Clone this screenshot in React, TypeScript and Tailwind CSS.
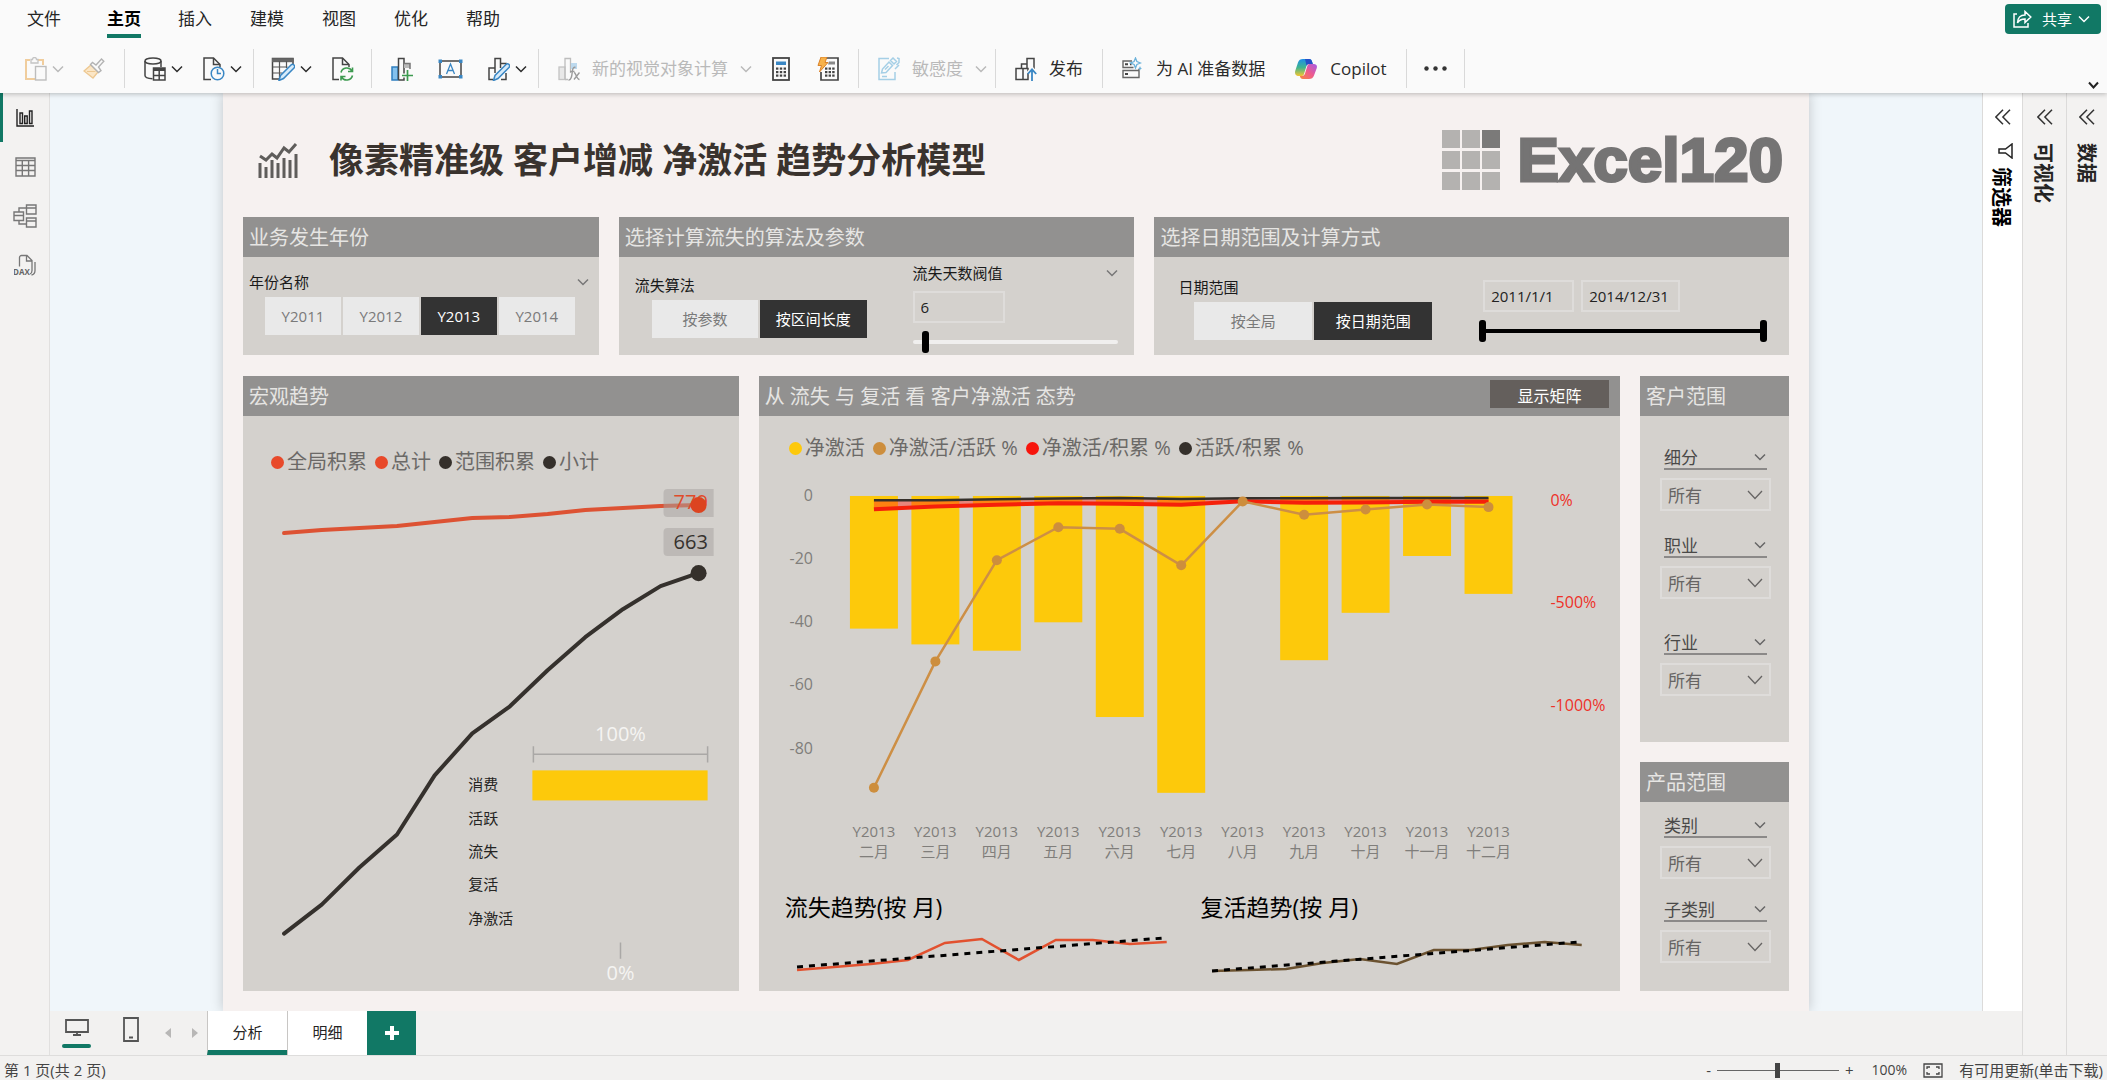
import React, { useState } from "react";

type IconProps = { className?: string };

/* ---------- small shared icons ---------- */

function Chevron({ className = "" }: IconProps) {
  return (
    <svg className={className} viewBox="0 0 12 8" fill="none" stroke="currentColor" aria-hidden="true">
      <path d="M1 1.5 6 6.5 11 1.5" strokeWidth="1.5" />
    </svg>
  );
}

function DoubleLeft() {
  return (
    <svg className="h-4 w-4" viewBox="0 0 16 16" fill="none" stroke="#333" strokeWidth="1.5" aria-hidden="true">
      <path d="M8 .8.9 8 8 15.2M15 .8 7.9 8 15 15.2" />
    </svg>
  );
}

/* ---------- ribbon icons ---------- */

function PasteIcon() {
  return (
    <svg className="h-6 w-[22px]" viewBox="0 0 22 24" fill="none" aria-hidden="true">
      <path d="M10 22H1V3h4M13 3h5v5" stroke="#f0cd9d" strokeWidth="2" />
      <path d="M6 5V2.500h1.500a2 2 0 0 1 4 0H13V6H6z" stroke="#c4c4c4" strokeWidth="1.300" />
      <rect x="10.500" y="9.500" width="10.500" height="13.500" fill="#fafafa" stroke="#bdbdbd" strokeWidth="1.400" />
    </svg>
  );
}

function BrushIcon() {
  return (
    <svg className="h-6 w-[22px]" viewBox="0 0 22 24" fill="none" aria-hidden="true">
      <path d="M1 14 8 8l7 7-5 6z" fill="#fbe6c6" stroke="#edc892" strokeWidth="1.300" />
      <path d="M4 14.500h8.500" stroke="#edc892" />
      <path d="m7.500 7.500 2-2 3.500 2.500 5.500-6 2.300 2.300L15.500 10l2.500 3.500-2.500 2z" fill="#fafafa" stroke="#b3b3b3" strokeWidth="1.400" />
    </svg>
  );
}

function DatabaseIcon() {
  return (
    <svg className="h-6 w-[22px]" viewBox="0 0 22 24" fill="none" stroke="#444" strokeWidth="1.500" aria-hidden="true">
      <ellipse cx="9" cy="4" rx="8" ry="3" />
      <path d="M1 4v14.500c0 1.700 3 3 7.500 3.200M17 4v6" />
      <rect x="9.500" y="11" width="11.500" height="12" fill="#fafafa" />
      <path d="M9.500 12.500h11.500" strokeWidth="3" />
      <path d="M9.500 18.500h11.500M15.200 14v9" />
    </svg>
  );
}

function FileClockIcon() {
  return (
    <svg className="h-6 w-[22px]" viewBox="0 0 22 24" fill="none" aria-hidden="true">
      <path d="M8 22.500H1V1h9.500L17 7.500V10" stroke="#444" strokeWidth="1.500" />
      <path d="M10.500 1v6.500H17" stroke="#444" strokeWidth="1.500" />
      <circle cx="14.500" cy="16.500" r="6.300" stroke="#3a87c4" strokeWidth="1.500" />
      <path d="M14.500 12v4.500h3.500" stroke="#3a87c4" strokeWidth="1.500" />
    </svg>
  );
}

function TableEditIcon() {
  return (
    <svg className="h-6 w-6" viewBox="0 0 24 24" fill="none" aria-hidden="true">
      <path d="M8 22H1.500V1.500H22V8" stroke="#444" strokeWidth="1.500" />
      <path d="M1 3.200h21.500" stroke="#666" strokeWidth="4" />
      <path d="M1.500 10h15M1.500 16h10M8.500 4v17M15.500 4v7" stroke="#555" strokeWidth="1.200" />
      <path d="m8 23.500 1.500-5L20 8a2 2 0 0 1 3 3L12.500 21.500z" fill="#d6ebfa" stroke="#3a87c4" strokeWidth="1.500" />
    </svg>
  );
}

function FileRefreshIcon() {
  return (
    <svg className="h-6 w-[22px]" viewBox="0 0 22 24" fill="none" aria-hidden="true">
      <path d="M7 22.500H1V1h9.500L17 7.500V10" stroke="#444" strokeWidth="1.500" />
      <path d="M10.500 1v6.500H17" stroke="#444" strokeWidth="1.500" />
      <path d="M9 15.500a6 6 0 0 1 11-1.500M20.500 18.500a6 6 0 0 1-11 1.500M20.500 10.500v4h-4.500M9 23.500v-4h4.500" stroke="#3d9a50" strokeWidth="1.600" />
    </svg>
  );
}

function ChartPlusIcon() {
  return (
    <svg className="h-6 w-[22px]" viewBox="0 0 22 24" fill="none" aria-hidden="true">
      <rect x="1" y="10" width="6" height="13" fill="#83c1ee" stroke="#2f7fc0" strokeWidth="1.500" />
      <path d="M7.500 23V1.500H13V23H7.500" fill="#fafafa" stroke="#444" strokeWidth="1.500" />
      <path d="M13 7h6v4h-6z" fill="#bbb" />
      <path d="M13 6.500h6V12" stroke="#777" strokeWidth="1.500" />
      <path d="M16.500 12v12M10.500 18.500h11.500" stroke="#fafafa" strokeWidth="4" />
      <path d="M16.500 13v11M11 18.500h11" stroke="#3d9a50" strokeWidth="1.700" />
    </svg>
  );
}

function TextBoxIcon() {
  return (
    <svg className="h-6 w-[25px]" viewBox="0 0 25 24" fill="none" aria-hidden="true">
      <rect x="2" y="4" width="21" height="16" stroke="#444" strokeWidth="1.500" />
      <path d="M8.500 17 12.500 7l4 10M9.800 13.500h5.400" stroke="#3a87c4" strokeWidth="1.300" />
      <path d="M.5 2.500h3.500v3.500H.5zM21 2.500h3.500v3.500H21zM.5 18h3.500v3.500H.5zM21 18h3.500v3.500H21z" fill="#3a87c4" />
    </svg>
  );
}

function ChartEditIcon() {
  return (
    <svg className="h-6 w-[22px]" viewBox="0 0 22 24" fill="none" aria-hidden="true">
      <path d="M5 22.500H1V11h6M7 16V1.500h5.500V11M12.500 6.500H18v2M18 16v6.500h-5" stroke="#444" strokeWidth="1.500" />
      <path d="m5.500 23.500 1.500-5L18 7.500a2 2 0 0 1 3 3L10 21.500z" fill="#d6ebfa" stroke="#3a87c4" strokeWidth="1.500" />
    </svg>
  );
}

function ChartFxIcon() {
  return (
    <svg className="h-6 w-[22px]" viewBox="0 0 22 24" fill="none" aria-hidden="true">
      <rect x="1" y="10" width="6" height="12.500" fill="#e8e8e8" stroke="#c4c4c4" strokeWidth="1.300" />
      <path d="M7 22.500V1.500h5.500V16M7 22.500h3" stroke="#bdbdbd" strokeWidth="1.300" />
      <path d="M13 6h6v6h-6z" fill="#bcd9ee" />
      <path d="M17.500 10.500c-2.500-1-3 2-3.300 5s-1 8-3.700 7.500M12 14.500h4.500M16 15.500c2 0 2.500 7 5.500 7M21.500 15.500l-5.500 7" stroke="#9b9b9b" strokeWidth="1.400" />
    </svg>
  );
}

function CalculatorIcon() {
  return (
    <svg className="h-6 w-[18px]" viewBox="0 0 18 24" fill="none" aria-hidden="true">
      <rect x="1" y="1" width="16" height="22" stroke="#444" strokeWidth="1.800" />
      <rect x="4" y="4.500" width="10" height="3.500" fill="#3a87c4" />
      <g fill="#444">
        {[10.5, 14, 17.5].map((y) => [4, 7.8, 11.6].map((x) => <rect key={x + "-" + y} x={x} y={y} width="2.400" height="2.200" />))}
      </g>
    </svg>
  );
}

function QuickCalcIcon() {
  return (
    <svg className="h-6 w-[22px]" viewBox="0 0 22 24" fill="none" aria-hidden="true">
      <path d="M9 1h12v22H4v-8" stroke="#444" strokeWidth="1.700" />
      <path d="M12 4.500h6v3h-7z" fill="#888" />
      <g fill="#444">
        {[10.5, 14, 17.5].map((y) => [8, 11.6, 15.2].map((x) => <rect key={x + "-" + y} x={x} y={y} width="2.400" height="2.200" />))}
      </g>
      <path d="M4 0h6L8 5.500h3L2.500 15l2-6.500H1z" fill="#f7b24a" stroke="#d9822b" />
    </svg>
  );
}

function SensitivityIcon() {
  return (
    <svg className="h-6 w-[22px]" viewBox="0 0 22 24" fill="none" stroke="#a5cfe6" strokeWidth="1.500" aria-hidden="true">
      <path d="M11 1.500H1v21h16V15" />
      <path d="m3.500 16 1-4 6.500-7 3.500 3.500L8 15.500zM12.500 3.500 15 1l3.500 3.500L16 7zM18.500 8l2.500-2.500V1.500L19 1M17 12l4-4" />
      <path d="m7 12.500 3.500-3.500M4 19.500h5" />
    </svg>
  );
}

function PublishIcon() {
  return (
    <svg className="h-6 w-[22px]" viewBox="0 0 22 24" fill="none" aria-hidden="true">
      <path d="M6.500 11.500V7H12M12 11V1.500h7V12M1 11.500h7v11H1zM8 11.500h5v11H1" stroke="#444" strokeWidth="1.500" />
      <path d="M17 24V12.500M13 16.500l4-4.500 4 4.500" stroke="#fafafa" strokeWidth="4" />
      <path d="M17 24V12.500M12.800 17l4.200-4.700 4.200 4.700" stroke="#3a87c4" strokeWidth="1.800" />
    </svg>
  );
}

function AiDataIcon() {
  return (
    <svg className="h-6 w-5" viewBox="0 0 20 24" fill="none" aria-hidden="true">
      <path d="M10 4H1v6.500h10.500M1 13.500h16v7H1zM17 12v1.500" stroke="#666" strokeWidth="1.400" />
      <path d="M3 7.200h3M3 17h3M8 7.200h1.500" stroke="#444" strokeWidth="2" />
      <path d="m13.500 1 1.400 3.600L18.500 6l-3.600 1.400-1.400 3.600-1.400-3.600L8.500 6l3.600-1.400z" fill="#fafafa" stroke="#6cb2da" strokeWidth="1.300" />
      <path d="m18 9 .7 1.800 1.300.5-1.300.6-.7 1.600-.7-1.600-1.300-.6 1.300-.5z" fill="#6cb2da" />
    </svg>
  );
}

function CopilotIcon() {
  return (
    <svg className="h-6 w-6" viewBox="0 0 24 24" aria-hidden="true">
      <defs>
        <linearGradient id="cp-a" x1="0" y1="0" x2="0" y2="1">
          <stop offset="0" stopColor="#1c8fe8" />
          <stop offset=".5" stopColor="#3fb58f" />
          <stop offset="1" stopColor="#f5c531" />
        </linearGradient>
        <linearGradient id="cp-b" x1="1" y1="0" x2="0" y2="1">
          <stop offset="0" stopColor="#a35be8" />
          <stop offset=".5" stopColor="#ee5a8f" />
          <stop offset="1" stopColor="#f7893c" />
        </linearGradient>
      </defs>
      <path d="M9 2h6c2 0 2.600 1 3.200 3l.6 2H15c-1.500 0-2.300 1-2.700 2.400L10 17c-.5 1.500-1.300 2-2.800 2H5c-3 0-4.500-2-3.800-5L4 5.500C4.800 3 6.500 2 9 2z" fill="url(#cp-a)" />
      <path d="M11 2h4c2 0 2.600 1 3.200 3l.6 2H15c-1.300 0-2 .6-2.500 1.700z" fill="#2550c8" />
      <path d="M15 22H9c-2 0-2.600-1-3.200-3H8c1.500 0 2.600-.8 3-2.400L13.500 8.500C14 7 14.800 7 16 7h3c3 0 4.500 1 3.800 4L20 18.500C19.200 21 17.500 22 15 22z" fill="url(#cp-b)" />
    </svg>
  );
}

function ShareIcon() {
  return (
    <svg className="h-[18px] w-[19px]" viewBox="0 0 19 18" fill="none" stroke="#fff" strokeWidth="1.500" aria-hidden="true">
      <path d="M4 4H1v13h14v-4" />
      <path d="M4.500 13c0-5 3-8 7.500-8V1.500L17.800 7 12 12.500V9C8.500 9 6 10 4.500 13z" />
    </svg>
  );
}

/* ---------- ribbon ---------- */

function ToolButton({
  icon,
  label,
  menu,
  muted,
  name,
  gap = "gap-3",
}: {
  icon: React.ReactNode;
  label?: string;
  menu?: boolean;
  muted?: boolean;
  name: string;
  gap?: string;
}) {
  return (
    <button type="button" aria-label={name} className={`flex items-center whitespace-nowrap text-[17px] ${label ? gap : "gap-[5px]"} ${muted ? "text-[#b9b9b9]" : "text-[#2b2b2b]"}`}>
      {icon}
      {label && <span>{label}</span>}
      {menu && <Chevron className="h-2 w-3" />}
    </button>
  );
}

function Group({ children, className }: { children: React.ReactNode; className: string }) {
  return <div className={`flex h-[39px] shrink-0 items-center border-r border-[#d9d9d9] ${className}`}>{children}</div>;
}

function Ribbon() {
  const menus = ["插入", "建模", "视图", "优化", "帮助"];
  return (
    <header className="relative z-10 bg-[#fafafa] shadow-[0_1px_5px_rgba(0,0,0,0.25)]">
      <div className="flex h-[49px] items-start justify-between pr-1.5">
        <nav className="flex pl-[27px] text-[17px] leading-[38px] text-[#252525]">
          <button type="button" className="mr-[46px]">文件</button>
          <button type="button" className="mr-[37px] border-b-4 border-[#117865] pt-1 font-bold leading-[30px] text-black">
            主页
          </button>
          <div className="flex gap-[38px]">
            {menus.map((m) => (
              <button type="button" key={m}>{m}</button>
            ))}
          </div>
        </nav>
        <button type="button" className="mt-1 flex h-[30px] w-24 items-center rounded-[4px] bg-[#117865] pl-2 text-[15px] text-white">
          <ShareIcon />
          <span className="ml-2.5">共享</span>
          <Chevron className="ml-1.5 h-2 w-3" />
        </button>
      </div>
      <div className="flex items-start justify-between">
        <div className="flex h-11">
          <Group className="gap-[19px] pl-[25px] pr-[19px]">
            <ToolButton name="粘贴" icon={<PasteIcon />} menu muted />
            <ToolButton name="格式刷" icon={<BrushIcon />} muted />
          </Group>
          <Group className="gap-5 pl-[19px] pr-[11px]">
            <ToolButton name="获取数据" icon={<DatabaseIcon />} menu />
            <ToolButton name="最近使用的源" icon={<FileClockIcon />} menu />
          </Group>
          <Group className="gap-5 px-[17px]">
            <ToolButton name="转换数据" icon={<TableEditIcon />} menu />
            <ToolButton name="刷新" icon={<FileRefreshIcon />} />
          </Group>
          <Group className="gap-[25px] pl-[19px] pr-[11px]">
            <ToolButton name="新建视觉对象" icon={<ChartPlusIcon />} />
            <ToolButton name="文本框" icon={<TextBoxIcon />} />
            <ToolButton name="更多视觉对象" icon={<ChartEditIcon />} menu />
          </Group>
          <Group className="gap-5 px-[19px]">
            <ToolButton name="新的视觉对象计算" icon={<ChartFxIcon />} label="新的视觉对象计算" menu muted />
            <div className="flex gap-[27px]">
              <ToolButton name="新建度量值" icon={<CalculatorIcon />} />
              <ToolButton name="快速度量值" icon={<QuickCalcIcon />} />
            </div>
          </Group>
          <Group className="pl-[19px] pr-2">
            <ToolButton name="敏感度" icon={<SensitivityIcon />} label="敏感度" menu muted />
          </Group>
          <Group className="px-[19px]">
            <ToolButton name="发布" icon={<PublishIcon />} label="发布" />
          </Group>
          <Group className="gap-[29px] px-[19px]">
            <ToolButton name="为 AI 准备数据" icon={<AiDataIcon />} label="为 AI 准备数据" gap="gap-3.5" />
            <ToolButton name="Copilot" icon={<CopilotIcon />} label="Copilot" />
          </Group>
          <Group className="px-[17px]">
            <ToolButton
              name="更多"
              icon={
                <svg className="h-[5px] w-[23px]" viewBox="0 0 23 5" fill="#333" aria-hidden="true">
                  <circle cx="2.500" cy="2.500" r="2.200" />
                  <circle cx="11.500" cy="2.500" r="2.200" />
                  <circle cx="20.500" cy="2.500" r="2.200" />
                </svg>
              }
            />
          </Group>
        </div>
        <button type="button" aria-label="折叠功能区" className="mr-2 mt-8 text-[#222]">
          <svg className="h-2 w-[11px]" viewBox="0 0 11 8" fill="none" stroke="currentColor" strokeWidth="2" aria-hidden="true">
            <path d="m1 1.500 4.500 5 4.500-5" />
          </svg>
        </button>
      </div>
    </header>
  );
}

/* ---------- left rail ---------- */

function LeftRail() {
  const items = [
    {
      name: "报表视图",
      icon: (
        <svg className="h-[18px] w-[18px]" viewBox="0 0 18 18" fill="none" stroke="#222" strokeWidth="1.400" aria-hidden="true">
          <path d="M1 0v17h17M4 4h2.500v10.500H4zM8.700 7h2.500v7.500H8.700zM13.500 2H16v12.500h-2.500z" />
        </svg>
      ),
    },
    {
      name: "表格视图",
      icon: (
        <svg className="h-5 w-[21px]" viewBox="0 0 21 20" fill="none" stroke="#777" strokeWidth="1.400" aria-hidden="true">
          <path d="M1 1h19v18H1zM1 3.500h19M1 8.500h19M1 13.500h19M7.300 3.500V19M13.600 3.500V19" />
        </svg>
      ),
    },
    {
      name: "模型视图",
      icon: (
        <svg className="h-6 w-6" viewBox="0 0 24 24" fill="none" stroke="#777" strokeWidth="1.400" aria-hidden="true">
          <path d="M13.500 1H23v9h-9.500zM13.500 4H23M13.500 14H23v9h-9.500zM13.500 17H23M1 8h9.500v8.500H1zM1 11.500h9.500M6 8V4h7.500M6 16.500V20h7.500" />
        </svg>
      ),
    },
    {
      name: "DAX 查询视图",
      icon: (
        <svg className="h-[22px] w-[22px]" viewBox="0 0 22 22" fill="none" stroke="#777" strokeWidth="1.300" aria-hidden="true">
          <path d="M5.500 12.500V3.500a2 2 0 0 1 2-2H13l5 5v10c0 2-.5 3-2 3.500M12.500 1.500V7H18M21 8v8.500c0 2.500-1 4-3.500 4.500" />
          <text x="-1" y="20.500" fontSize="8" fontWeight="700" fill="#666" stroke="none">DAX</text>
        </svg>
      ),
    },
  ];
  return (
    <nav className="w-[50px] shrink-0 border-r border-[#e1e0df] bg-[#f3f2f1]">
      {items.map((it, i) => (
        <button
          key={it.name}
          type="button"
          aria-label={it.name}
          className={`flex h-[49px] w-full items-center justify-center border-l-[3px] pr-0.5 ${i === 0 ? "border-[#117865]" : "border-transparent"}`}
        >
          {it.icon}
        </button>
      ))}
    </nav>
  );
}

/* ---------- report building blocks ---------- */

function Panel({
  title,
  action,
  children,
  className = "",
}: {
  title: string;
  action?: React.ReactNode;
  children: React.ReactNode;
  className?: string;
}) {
  return (
    <section className={`flex min-w-0 flex-col bg-[#d4d1cd] ${className}`}>
      <div className="flex h-10 items-center justify-between bg-[#929190] pl-1.5 pr-[11px]">
        <h2 className="whitespace-nowrap pt-0.5 text-[20px] leading-8 text-[#e6e5e3]">{title}</h2>
        {action}
      </div>
      {children}
    </section>
  );
}

function Segments({ options, initial, className }: { options: string[]; initial: number; className: string }) {
  const [selected, setSelected] = useState(initial);
  return (
    <div className={`flex gap-0.5 ${className}`}>
      {options.map((o, i) => (
        <button
          key={o}
          type="button"
          aria-pressed={i === selected}
          onClick={() => setSelected(i)}
          className={`h-[38px] flex-1 whitespace-nowrap text-[15px] ${i === selected ? "bg-[#333333] text-white" : "bg-[#e9e9e9] text-[#7a7a7a]"}`}
        >
          {o}
        </button>
      ))}
    </div>
  );
}

const thumb =
  "absolute inset-0 m-0 h-full w-full appearance-none bg-transparent pointer-events-none [&::-webkit-slider-thumb]:pointer-events-auto [&::-webkit-slider-thumb]:h-[22px] [&::-webkit-slider-thumb]:w-[7px] [&::-webkit-slider-thumb]:appearance-none [&::-webkit-slider-thumb]:rounded-[3px] [&::-webkit-slider-thumb]:bg-black";

const box = "h-8 border-2 border-[#dedcda] bg-transparent px-1.5 text-[15px] text-[#222] outline-none";

function Slicer({ label, className }: { label: string; className: string }) {
  return (
    <div className={`pl-5 pr-[18px] ${className}`}>
      <div className="mx-1 flex h-6 items-center justify-between border-b-2 border-[#8b8988] pr-px text-[17px] leading-[22px] text-[#4a4948]">
        <label htmlFor={`slicer-${label}`} className="pt-0.5">{label}</label>
        <Chevron className="h-2 w-3 text-[#666]" />
      </div>
      <div className="relative mt-2 text-[#666463]">
        <select id={`slicer-${label}`} className="block h-[33px] w-full appearance-none border-2 border-[#dedcda] bg-transparent px-1.5 pt-0.5 text-[17px] outline-none">
          <option>所有</option>
        </select>
        <svg className="pointer-events-none absolute right-2 top-3 h-[10px] w-4" viewBox="0 0 16 10" fill="none" stroke="currentColor" strokeWidth="1.300" aria-hidden="true">
          <path d="m1 1 7 7.500L15 1" />
        </svg>
      </div>
    </div>
  );
}

function Legend({ items, className }: { items: [string, string][]; className: string }) {
  return (
    <ul className={`flex gap-2 whitespace-nowrap text-[20px] leading-6 text-[#6b6967] ${className}`}>
      {items.map(([color, name]) => (
        <li key={name} className="flex items-center gap-[3px]">
          <span className="h-[13px] w-[13px] rounded-full" style={{ backgroundColor: color }} />
          {name}
        </li>
      ))}
    </ul>
  );
}

const toPoints = (xs: (i: number) => number, ys: number[]) => ys.map((y, i) => `${xs(i)},${y}`).join(" ");

/* ---------- charts ---------- */

function MacroChart() {
  const x = (i: number) => 41 + i * 37.6;
  const total = [59, 56, 54, 52, 48, 44, 43, 40, 36, 34, 32, 31];
  const range = [459, 430, 393, 360, 301, 259, 232, 196, 163, 135, 112, 99];
  const stages = ["消费", "活跃", "流失", "复活", "净激活"];
  return (
    <svg className="w-full" viewBox="0 0 495 516" role="img" aria-label="宏观趋势">
      <g fill="none" strokeWidth="4" strokeLinecap="round" strokeLinejoin="round">
        <polyline points={toPoints(x, total)} stroke="#dd5233" />
        <polyline points={toPoints(x, range)} stroke="#35312d" />
      </g>
      <path d="M424 15h46v28h-46a4 4 0 0 1-4-4V19a4 4 0 0 1 4-4zM424 54h46v28h-46a4 4 0 0 1-4-4V58a4 4 0 0 1 4-4z" fill="#a5a2a0" fillOpacity=".5" />
      <g fontSize="20">
        <text x="430" y="35" fill="#e04b2b">779</text>
        <text x="430" y="75" fill="#35312d">663</text>
      </g>
      <circle cx="455" cy="31" r="8" fill="#dc4420" />
      <circle cx="455" cy="99" r="8" fill="#35302b" />

      <g fontSize="20" fill="#f5f4f2" textAnchor="middle">
        <text x="377" y="267">100%</text>
        <text x="377" y="505">0%</text>
      </g>
      <path d="M290 280h174M290 272v16M464 272v16M377 468v16" stroke="#aaa8a6" strokeWidth="1.500" />
      <rect x="289" y="296" width="175" height="30" fill="#fdc90b" />
      <g fontSize="15" fill="#252423">
        {stages.map((s, i) => (
          <text key={s} x="225" y={316 + i * 33.3}>{s}</text>
        ))}
      </g>
    </svg>
  );
}

function ComboChart() {
  const months = ["二月", "三月", "四月", "五月", "六月", "七月", "八月", "九月", "十月", "十一月", "十二月"];
  const net = [42, 47, 49, 40, 70, 94, 0, 52, 37, 19, 31];
  const netActive = [-1400, -783, -289, -128, -136, -314, -2, -67, -42, -17, -30];
  const netTotal = [-40, -27, -19, -11, -14, -19, -1, -9, -8, -4, -4];
  const activeTotal = [4, 4, 9, 12, 15, 10, 13, 13, 15, 15, 15];
  const x = (i: number) => 115 + i * 61.5;
  const pct = (v: number) => 41 - v * 0.205;
  const black = activeTotal.map(pct);
  const red = netTotal.map(pct);
  const band = toPoints(x, black) + " " + red.map((y, i) => `${x(i)},${y}`).reverse().join(" ");
  return (
    <svg className="w-full" viewBox="0 0 862 420" role="img" aria-label="客户净激活态势">
      <g fill="#fdc90b">
        {net.map((v, i) => (
          <rect key={months[i]} x={x(i) - 24} y="36" width="48" height={v * 3.16} />
        ))}
      </g>
      <polygon points={band} fill="#ff2a1a" fillOpacity=".45" />
      <polyline points={toPoints(x, red)} fill="none" stroke="#f5200a" strokeWidth="4" />
      <polyline points={toPoints(x, black)} fill="none" stroke="#35302b" strokeWidth="2.500" />
      <polyline points={toPoints(x, netActive.map(pct))} fill="none" stroke="#cd8f45" strokeWidth="2.500" />
      {netActive.map((v, i) => (
        <circle key={months[i]} cx={x(i)} cy={pct(v)} r="5" fill="#cd8e3d" />
      ))}
      <g fontSize="16" fill="#807e7b" textAnchor="end">
        {[0, -20, -40, -60, -80].map((v) => (
          <text key={v} x="54" y={41 - v * 3.16}>{v}</text>
        ))}
      </g>
      <g fontSize="16" fill="#ee3028">
        {[0, -500, -1000].map((v) => (
          <text key={v} x="792" y={46 - v * 0.205}>{v}%</text>
        ))}
      </g>
      <g fontSize="15" fill="#807e7b" textAnchor="middle">
        {months.map((m, i) => (
          <React.Fragment key={m}>
            <text x={x(i)} y="377">Y2013</text>
            <text x={x(i)} y="397">{m}</text>
          </React.Fragment>
        ))}
      </g>
    </svg>
  );
}

function Sparkline({ title, color, values, trend }: { title: string; color: string; values: number[]; trend: [number, number] }) {
  const x = (i: number) => 12 + i * 37;
  return (
    <figure>
      <figcaption className="text-[23px] leading-8 text-black">{title}</figcaption>
      <svg className="w-full" viewBox="0 0 416 60" aria-hidden="true">
        <polyline points={toPoints(x, values)} fill="none" stroke={color} strokeWidth="2.500" />
        <path d={`M12 ${trend[0]}L379 ${trend[1]}`} stroke="#000" strokeWidth="3" strokeDasharray="6 6" />
      </svg>
    </figure>
  );
}

/* ---------- report page ---------- */

function ReportHeader() {
  return (
    <div className="flex h-[124px] items-center justify-between pl-[15px] pr-1.5 pt-2.5">
      <div className="flex items-center">
        <svg className="h-[35px] w-10" viewBox="0 0 40 35" fill="none" stroke="#5f5d5b" strokeWidth="3" aria-hidden="true">
          <path d="m2 13 6 4 6-6 5 4 7-10 5 4 7-8" />
          <path d="M2 20v15M8 24v11M14 17v18M20 20v15M26 15v20M32 17v18M38 11v24" />
        </svg>
        <h1 className="ml-[31px] whitespace-nowrap text-[35px] font-bold leading-[48px] text-[#3a332e]">像素精准级 客户增减 净激活 趋势分析模型</h1>
      </div>
      <div className="flex items-center gap-[18px]">
        <div className="grid grid-cols-3 gap-x-0.5 gap-y-[3px]">
          {Array.from({ length: 9 }, (_, i) => (
            <span key={i} className={`h-[18px] w-[18px] ${i === 2 ? "bg-[#7b7a79]" : "bg-[#b4b2b0]"}`} />
          ))}
        </div>
        <span className="font-['Liberation_Sans'] text-[62px] font-bold leading-[60px] text-[#757474] [-webkit-text-stroke:3px_#757474]">Excel120</span>
      </div>
    </div>
  );
}

function ReportPage() {
  return (
    <main className="mx-[173px] min-w-0 flex-1 bg-[#f6f1f0] px-5 pb-5 shadow-[0_0_12px_rgba(0,0,0,0.2)]">
      <ReportHeader />

      <div className="grid grid-cols-[356fr_516fr_635fr] gap-5">
        <Panel title="业务发生年份">
          <div className="flex h-9 items-end justify-between pb-px pl-1.5 pr-[10px] text-[15px] leading-5 text-[#1a1a1a]">
            <span>年份名称</span>
            <Chevron className="mb-1.5 h-2 w-3 text-[#777]" />
          </div>
          <Segments options={["Y2011", "Y2012", "Y2013", "Y2014"]} initial={2} className="mb-5 ml-[22px] mr-6 mt-1" />
        </Panel>

        <Panel title="选择计算流失的算法及参数">
          <div className="grid grid-cols-[294fr_222fr]">
            <div className="pl-4 pt-[18px]">
              <p className="text-[15px] leading-5 text-[#1a1a1a]">流失算法</p>
              <Segments options={["按参数", "按区间长度"]} initial={1} className="ml-[17px] mr-[46px] mt-[5px]" />
            </div>
            <div className="pr-4 pt-1.5">
              <div className="flex items-center justify-between text-[15px] leading-5 text-[#1a1a1a]">
                <label htmlFor="days">流失天数阀值</label>
                <Chevron className="h-2 w-3 text-[#777]" />
              </div>
              <input id="days" defaultValue="6" className={`${box} mt-2 block w-[92px]`} />
              <div className="relative mt-2 h-[22px]">
                <div className="absolute inset-x-0 top-[9px] h-1 rounded bg-[#f0efee]" />
                <input type="range" aria-label="流失天数" min={0} max={130} defaultValue={6} className={thumb} />
              </div>
            </div>
          </div>
        </Panel>

        <Panel title="选择日期范围及计算方式">
          <div className="grid grid-cols-[325fr_310fr]">
            <div className="pl-6 pt-5">
              <p className="text-[15px] leading-5 text-[#1a1a1a]">日期范围</p>
              <Segments options={["按全局", "按日期范围"]} initial={1} className="ml-4 mr-[47px] mt-[5px]" />
            </div>
            <div className="pr-[22px] pt-[23px]">
              <div className="ml-1 flex gap-[7px]">
                <input aria-label="开始日期" defaultValue="2011/1/1" className={`${box} w-[91px]`} />
                <input aria-label="结束日期" defaultValue="2014/12/31" className={`${box} w-[99px]`} />
              </div>
              <div className="relative mt-2 h-[22px]">
                <div className="absolute inset-x-1 top-[9px] h-1 bg-black" />
                <input type="range" aria-label="开始" min={0} max={100} defaultValue={0} className={thumb} />
                <input type="range" aria-label="结束" min={0} max={100} defaultValue={100} className={thumb} />
              </div>
            </div>
          </div>
        </Panel>
      </div>

      <div className="mt-[21px] grid grid-cols-[496fr_862fr_149fr] gap-5">
        <Panel title="宏观趋势">
          <Legend
            className="pl-7 pt-[34px]"
            items={[
              ["#e8492a", "全局积累"],
              ["#e8492a", "总计"],
              ["#35302b", "范围积累"],
              ["#35302b", "小计"],
            ]}
          />
          <MacroChart />
        </Panel>

        <Panel
          title="从 流失 与 复活 看 客户净激活 态势"
          action={<button type="button" className="mb-1 h-7 w-[119px] bg-[#645f5c] pt-1 text-[16px] leading-6 text-white">显示矩阵</button>}
        >
          <Legend
            className="pl-[30px] pt-5"
            items={[
              ["#fdc90b", "净激活"],
              ["#cd8e3d", "净激活/活跃 %"],
              ["#f7150c", "净激活/积累 %"],
              ["#35302b", "活跃/积累 %"],
            ]}
          />
          <ComboChart />
          <div className="mt-[11px] grid grid-cols-2 pb-[5px] pl-[26px] pr-1">
            <Sparkline title="流失趋势(按 月)" color="#e2512f" values={[47, 44, 41, 37, 20, 16, 37, 17, 17, 21, 19]} trend={[44, 15]} />
            <Sparkline title="复活趋势(按 月)" color="#6b5230" values={[48, 47, 46, 40, 36, 41, 27, 27, 22, 19, 22]} trend={[48, 19]} />
          </div>
        </Panel>

        <div className="flex min-w-0 flex-col gap-5">
          <Panel title="客户范围" className="flex-[366]">
            <Slicer label="细分" className="pt-[30px]" />
            <Slicer label="职业" className="pt-[23px]" />
            <Slicer label="行业" className="pt-8" />
          </Panel>
          <Panel title="产品范围" className="flex-[228]">
            <Slicer label="类别" className="pt-3" />
            <Slicer label="子类别" className="pt-[19px]" />
          </Panel>
        </div>
      </div>
    </main>
  );
}

/* ---------- side panes and footer ---------- */

const vertical = "[writing-mode:vertical-rl] [text-orientation:sideways] pr-[3px] text-[20px] leading-6 font-bold";

function SidePane({ title, className }: { title: string; className: string }) {
  return (
    <aside className={`flex shrink-0 flex-col items-center border-l border-[#dcdbda] bg-[#f3f2f1] pt-4 ${className}`}>
      <button type="button" aria-label={`展开${title}`}>
        <DoubleLeft />
      </button>
      <h2 className={`mt-[18px] text-[#252423] ${vertical}`}>{title}</h2>
    </aside>
  );
}

function FilterPane() {
  return (
    <aside className="flex w-10 shrink-0 flex-col items-center border-l border-[#dcdbda] bg-white pt-4">
      <button type="button" aria-label="展开筛选器">
        <DoubleLeft />
      </button>
      <svg className="ml-1 mt-[18px] h-4 w-4" viewBox="0 0 16 16" fill="none" stroke="#222" strokeWidth="1.500" aria-hidden="true">
        <path d="M15 1v14L8.500 10H2V6h6.500z" />
      </svg>
      <h2 className={`mt-2 text-black ${vertical}`}>筛选器</h2>
    </aside>
  );
}

function PageTabs() {
  return (
    <div className="flex h-11 bg-[#f2f1f0]">
      <button type="button" aria-label="桌面布局" className="ml-3 flex w-[29px] flex-col items-center pt-2">
        <svg className="h-[17px] w-6" viewBox="0 0 24 17" fill="none" stroke="#555" strokeWidth="1.800" aria-hidden="true">
          <path d="M1 1h22v12H1zM12 13v3M8 16h8" />
        </svg>
        <span className="mt-2 h-1 w-full rounded-full bg-[#117865]" />
      </button>
      <button type="button" aria-label="移动布局" className="ml-8 flex pt-1.5">
        <svg className="h-[25px] w-4" viewBox="0 0 16 25" fill="none" stroke="#555" strokeWidth="1.800" aria-hidden="true">
          <path d="M1 1h14v23H1zM6 20.500h4" />
        </svg>
      </button>
      <button type="button" aria-label="上一页" className="ml-[26px]">
        <svg className="h-2.5 w-1.5" viewBox="0 0 6 10" fill="#b8b7b6" aria-hidden="true"><path d="M6 0v10L0 5z" /></svg>
      </button>
      <button type="button" aria-label="下一页" className="ml-[21px] mr-[9px]">
        <svg className="h-2.5 w-1.5" viewBox="0 0 6 10" fill="#b8b7b6" aria-hidden="true"><path d="M0 0v10l6-5z" /></svg>
      </button>
      <button type="button" className="w-20 border-b-[5px] border-l border-b-[#117865] border-l-[#c8c6c4] bg-white pt-1 text-[15px] text-[#252423]">分析</button>
      <button type="button" className="w-20 border-l border-[#c8c6c4] bg-white text-[15px] text-[#252423]">明细</button>
      <button type="button" aria-label="新建页" className="flex w-[49px] items-center justify-center bg-[#117865]">
        <svg className="h-3.5 w-3.5" viewBox="0 0 14 14" stroke="#fff" strokeWidth="4" aria-hidden="true"><path d="M7 0v14M0 7h14" /></svg>
      </button>
    </div>
  );
}

function StatusBar() {
  return (
    <footer className="flex h-[26px] items-center justify-between border-t border-[#dedddc] bg-[#f2f1f0] pl-1 pr-1 pt-1 text-[15px] leading-5 text-[#444]">
      <span>第 1 页(共 2 页)</span>
      <div className="flex items-center">
        <button type="button" aria-label="缩小">-</button>
        <input
          type="range"
          aria-label="缩放"
          defaultValue={50}
          className="mx-1.5 h-4 w-[122px] appearance-none bg-transparent [&::-webkit-slider-runnable-track]:h-px [&::-webkit-slider-runnable-track]:bg-[#666] [&::-webkit-slider-thumb]:-mt-[7px] [&::-webkit-slider-thumb]:h-[15px] [&::-webkit-slider-thumb]:w-[5px] [&::-webkit-slider-thumb]:appearance-none [&::-webkit-slider-thumb]:bg-[#444]"
        />
        <button type="button" aria-label="放大">+</button>
        <span className="ml-[18px] text-[14px]">100%</span>
        <svg className="ml-4 h-[15px] w-5" viewBox="0 0 20 15" fill="none" stroke="#444" strokeWidth="1.300" aria-hidden="true">
          <path d="M1 1h18v13H1zM4 6V4h3M16 6V4h-3M4 9v2h3M16 9v2h-3" />
        </svg>
        <a href="#update" className="ml-4 whitespace-nowrap">有可用更新(单击下载)</a>
      </div>
    </footer>
  );
}

export default function App() {
  return (
    <div lang="zh-CN" className="flex min-h-screen flex-col bg-[#f2f1f0] font-['Open_Sans','Noto_Sans_CJK_SC',sans-serif]">
      <Ribbon />
      <div className="flex flex-1">
        <LeftRail />
        <div className="flex min-w-0 flex-1 flex-col">
          <div className="flex flex-1">
            <div className="flex min-w-0 flex-1 overflow-hidden bg-[#f0f6fa]">
              <ReportPage />
            </div>
            <FilterPane />
          </div>
          <PageTabs />
        </div>
        <SidePane title="可视化" className="w-11" />
        <SidePane title="数据" className="w-[41px]" />
      </div>
      <StatusBar />
    </div>
  );
}
